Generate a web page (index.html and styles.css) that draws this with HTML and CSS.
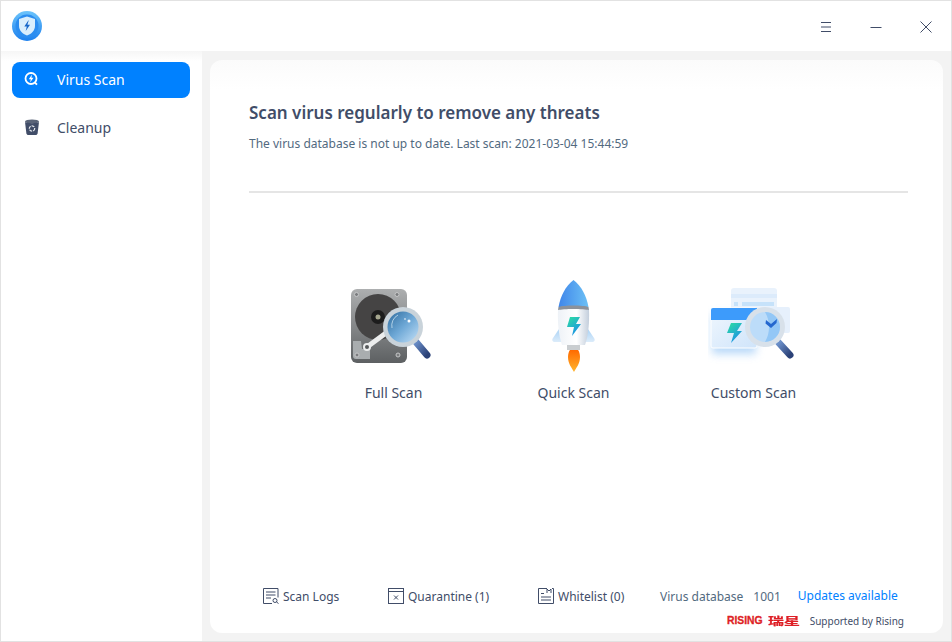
FILE: index.html
```html
<!DOCTYPE html>
<html lang="en">
<head>
    <meta charset="UTF-8">
    <meta name="viewport" content="width=device-width, initial-scale=1.0">
    <title>Virus Scan</title>
    <link rel="stylesheet" href="styles.css">
</head>
<body>
    <svg class="defs" width="0" height="0">
        <defs>
            <linearGradient id="boltGreen" x1="0" y1="0" x2="0.6" y2="1">
                <stop offset="0" stop-color="#2fe0a0"/>
                <stop offset="1" stop-color="#1a8fe8"/>
            </linearGradient>
            <linearGradient id="lensBlue" x1="0" y1="0" x2="1" y2="1">
                <stop offset="0" stop-color="#2f6c9e"/>
                <stop offset="0.5" stop-color="#6ea8d6"/>
                <stop offset="1" stop-color="#c3e0f7"/>
            </linearGradient>
            <linearGradient id="hddBody" x1="0" y1="0" x2="0" y2="1">
                <stop offset="0" stop-color="#adafb0"/>
                <stop offset="1" stop-color="#5d6062"/>
            </linearGradient>
            <linearGradient id="handle" x1="0" y1="0" x2="1" y2="1">
                <stop offset="0" stop-color="#6b8fc9"/>
                <stop offset="1" stop-color="#2b4177"/>
            </linearGradient>
            <linearGradient id="noseBlue" x1="0" y1="0" x2="1" y2="0">
                <stop offset="0" stop-color="#3f86ea"/>
                <stop offset="1" stop-color="#6cc0f5"/>
            </linearGradient>
            <linearGradient id="rocketBody" x1="0" y1="0" x2="1" y2="0">
                <stop offset="0" stop-color="#eef2f7"/>
                <stop offset="0.6" stop-color="#ffffff"/>
                <stop offset="1" stop-color="#c3cedc"/>
            </linearGradient>
            <linearGradient id="flame" x1="0" y1="0" x2="0" y2="1">
                <stop offset="0" stop-color="#ff6a00"/>
                <stop offset="1" stop-color="#ffb52e"/>
            </linearGradient>
            <linearGradient id="fin" x1="0" y1="0" x2="0" y2="1">
                <stop offset="0" stop-color="#9fcdf5"/>
                <stop offset="1" stop-color="#dcecfa"/>
            </linearGradient>
            <linearGradient id="windowBody" x1="0" y1="0" x2="1" y2="1">
                <stop offset="0" stop-color="#f0f7fe"/>
                <stop offset="1" stop-color="#cfe4fa"/>
            </linearGradient>
            <linearGradient id="logoRing" x1="0" y1="0" x2="0" y2="1">
                <stop offset="0" stop-color="#6cc4fb"/>
                <stop offset="1" stop-color="#1c80ee"/>
            </linearGradient>
            <filter id="softShadow" x="-30%" y="-30%" width="160%" height="170%">
                <feGaussianBlur stdDeviation="4"/>
            </filter>
        </defs>
    </svg>

    <div class="window">
        <header class="titlebar">
            <svg class="app-logo" width="30" height="30" viewBox="0 0 30 30">
                <circle cx="15" cy="15" r="15" fill="url(#logoRing)"/>
                <circle cx="15" cy="15" r="11.500" fill="#2b8df0"/>
                <path d="M15 5.500l8 2.600v6.600c0 4.800-3.400 8-8 9.800-4.600-1.800-8-5-8-9.800V8.100z" fill="#d9eefd"/>
                <path d="M16.300 9.500l-4 6h2.500l-1.100 4.500 4.300-6.200h-2.600l1.300-4.300z" fill="#1767c9"/>
            </svg>
            <div class="window-buttons">
                <svg width="12" height="12" viewBox="0 0 12 12"><path d="M1 1.500h10M1 6h10M1 10.500h10" stroke="#414d68" fill="none"/></svg>
                <svg width="12" height="12" viewBox="0 0 12 12"><path d="M0.500 6.500h11" stroke="#414d68" fill="none"/></svg>
                <svg width="12" height="12" viewBox="0 0 12 12"><path d="M0.500 0.500l11 11M11.500 0.500l-11 11" stroke="#414d68" fill="none"/></svg>
            </div>
        </header>

        <div class="content">
            <nav class="sidebar">
                <a class="nav-item active">
                    <svg width="16" height="16" viewBox="0 0 16 16">
                        <circle cx="7" cy="7.500" r="5.500" fill="none" stroke="#fff" stroke-width="1.800"/>
                        <path d="M8 3.600L4.800 8.200h2l-.7 3.200L9.500 6.800H7.400z" fill="#fff"/>
                        <path d="M10.800 11.500l2.200 2.200" stroke="#fff" stroke-width="1.800"/>
                    </svg>
                    <span>Virus Scan</span>
                </a>
                <a class="nav-item">
                    <svg width="16" height="16" viewBox="0 0 16 16">
                        <ellipse cx="8" cy="2.500" rx="7" ry="2" fill="#5a6478"/>
                        <path d="M1 3c1 1.500 13 1.500 14 0l-1.400 11.500c-.1.800-1 1.500-2 1.500H4.400c-1 0-1.900-.7-2-1.500z" fill="#414d68"/>
                        <circle cx="8" cy="9.500" r="2.700" fill="none" stroke="#e6e9ee" stroke-width="1.200" stroke-dasharray="3 1"/>
                    </svg>
                    <span>Cleanup</span>
                </a>
            </nav>

            <div class="main-area">
                <main class="panel">
                    <h1 class="panel-title">Scan virus regularly to remove any threats</h1>
                    <p class="panel-status">The virus database is not up to date. Last scan: 2021-03-04 15:44:59</p>
                    <hr class="divider">

                    <div class="scan-options">
                        <div class="scan-option">
                            <svg width="92" height="92" viewBox="0 0 92 92">
                                <rect x="3" y="9" width="56" height="74" rx="6" fill="url(#hddBody)"/>
                                <circle cx="8.500" cy="14.500" r="2" fill="#7b7d7f" stroke="#c6c7c8"/>
                                <circle cx="49" cy="14.500" r="2" fill="#7b7d7f" stroke="#c6c7c8"/>
                                <circle cx="30" cy="37" r="23" fill="#454444"/>
                                <circle cx="30" cy="37" r="7" fill="#1c1c1c"/>
                                <circle cx="30" cy="37" r="2.500" fill="#a5a68e"/>
                                <path d="M5 61h8l1 8h8v10H8a3 3 0 0 1-3-3z" fill="#a9adaf"/>
                                <circle cx="9" cy="75" r="2" fill="#7b7d7f" stroke="#c6c7c8"/>
                                <circle cx="50" cy="75" r="2" fill="#7b7d7f" stroke="#c6c7c8"/>
                                <path d="M19 67l23-17" stroke="#eceded" stroke-width="5" stroke-linecap="round"/>
                                <circle cx="19" cy="67" r="3" fill="#55585a" stroke="#eceded" stroke-width="2"/>
                                <path d="M68 62l11 13" stroke="url(#handle)" stroke-width="7" stroke-linecap="round"/>
                                <circle cx="55" cy="47" r="20" fill="#c9d3da"/>
                                <circle cx="55" cy="47" r="15.500" fill="url(#lensBlue)"/>
                                <path d="M44 48a12 12 0 0 1 6-13" fill="none" stroke="#d8ecf8" stroke-width="1" opacity="0.700"/>
                                <circle cx="61" cy="41" r="1.500" fill="#fff"/>
                                <circle cx="57" cy="39" r="0.800" fill="#fff"/>
                            </svg>
                            <span>Full Scan</span>
                        </div>
                        <div class="scan-option">
                            <svg width="92" height="92" viewBox="0 0 92 92">
                                <path d="M33 46L25 58c-1.500 2-.5 4 2 4h7zM58 46l8 12c1.500 2 .5 4-2 4h-7z" fill="url(#fin)"/>
                                <path d="M45.500 0c-8 6-13 16-15 27h30c-2-11-7-21-15-27z" fill="url(#noseBlue)"/>
                                <path d="M30.500 27c5-2 25-2 30 0l.5 3H30z" fill="#8c929b"/>
                                <path d="M30 30c5-1.500 26-1.500 31 0 .5 12-.5 25-4 35H34c-3.500-10-4.500-23-4-35z" fill="url(#rocketBody)"/>
                                <path d="M39 65h13v5H39z" fill="#c9cdd0"/>
                                <path d="M46 92c-2-4-6-8-6-15 0-3 1-6 2-7h8c1 1 2 4 2 7 0 7-4 11-6 15z" fill="url(#flame)"/>
                                <path d="M42 37h10l-4 7h5L44 56l2-9h-7z" fill="url(#boltGreen)"/>
                            </svg>
                            <span>Quick Scan</span>
                        </div>
                        <div class="scan-option">
                            <svg width="92" height="92" viewBox="0 0 92 92">
                                <rect x="4" y="34" width="44" height="40" fill="#a9d0f7" filter="url(#softShadow)" opacity="0.800"/>
                                <rect x="23" y="8" width="46" height="46" rx="3" fill="#e9f2fc"/>
                                <path d="M23 14h46v4H23z" fill="#dcebfb"/>
                                <path d="M26 22h4v4h-4zM34 22h32v4H34z" fill="#c6e2fa"/>
                                <rect x="60" y="27" width="22" height="26" rx="2" fill="#e6f0fc"/>
                                <rect x="3" y="28" width="46" height="40" rx="2" fill="url(#windowBody)" stroke="#fff"/>
                                <path d="M3 30a2 2 0 0 1 2-2h44v12H3z" fill="#3d9bfb"/>
                                <path d="M23 43h11l-5 8h5L23 63l3-10h-7z" fill="url(#boltGreen)"/>
                                <path d="M71 63l11 12" stroke="url(#handle)" stroke-width="7" stroke-linecap="round"/>
                                <circle cx="57" cy="47" r="20" fill="#d8e1ea"/>
                                <circle cx="57" cy="47" r="15" fill="#bcdcf9"/>
                                <path d="M57 32a15 15 0 0 1 0 30 30 30 0 0 0 0-30z" fill="#93c7f6"/>
                                <path d="M58 40l5 4 6-5-.5 4-5.500 5-5.500-4.500z" fill="#2467cf"/>
                            </svg>
                            <span>Custom Scan</span>
                        </div>
                    </div>

                    <footer class="panel-footer">
                        <div class="footer-row">
                            <a class="footer-link logs">
                                <svg width="16" height="16" viewBox="0 0 16 16" fill="none" stroke="#414d68">
                                    <path d="M9 15.500H.5V.5h14.500v9"/>
                                    <path d="M3 4h9.500M3 7h9.500M3 10h5"/>
                                    <circle cx="12" cy="12.500" r="2"/>
                                    <path d="M13.500 14l2 1.500"/>
                                </svg>
                                <span>Scan Logs</span>
                            </a>
                            <a class="footer-link quarantine">
                                <svg width="16" height="16" viewBox="0 0 16 16" fill="none" stroke="#414d68">
                                    <rect x="0.500" y="0.500" width="15" height="15"/>
                                    <path d="M.5 3.500h15M6 7.500l4 4M10 7.500l-4 4"/>
                                </svg>
                                <span>Quarantine (1)</span>
                            </a>
                            <a class="footer-link whitelist">
                                <svg width="16" height="16" viewBox="0 0 16 16" fill="none" stroke="#414d68">
                                    <path d="M9 .5H.5v15h15V.5H14"/>
                                    <path d="M3 5.500h3M3 9h10M3 12h10M9 5V1l2 2 2-2v4"/>
                                </svg>
                                <span>Whitelist (0)</span>
                            </a>
                            <div class="db-info">
                                <span class="db-label">Virus database</span>
                                <span class="db-version">1001</span>
                            </div>
                            <a class="updates">Updates available</a>
                        </div>
                        <div class="support-row">
                            <span class="rising-logo"><span class="rising-en">RISING</span><span class="rising-cn">瑞星</span></span>
                            <span class="support-text">Supported by Rising</span>
                        </div>
                    </footer>
                </main>
            </div>
        </div>
    </div>
</body>
</html>
```

FILE: styles.css
```css
* {
    box-sizing: border-box;
}
html, body {
    margin: 0;
    height: 100%;
}
body {
    font-family: "Noto Sans", sans-serif;
    color: #414d68;
    background-color: #fff;
}
.defs {
    position: absolute;
}
svg {
    display: block;
    flex: none;
}
.window {
    height: 642px;
    display: flex;
    flex-direction: column;
    border: 1px solid #e2e2e2;
}
.titlebar {
    height: 50px;
    flex: none;
    display: flex;
    align-items: center;
    justify-content: space-between;
    padding: 0 19px 0 11px;
    background-color: #fff;
}
.window-buttons {
    display: flex;
    gap: 38px;
    margin-top: 1px;
}
.content {
    flex: 1;
    display: flex;
    min-height: 0;
}
.sidebar {
    width: 201px;
    flex: none;
    padding: 11px 12px 0 11px;
    display: flex;
    flex-direction: column;
    gap: 12px;
    background: linear-gradient(#f6f6f6, #fff 10px);
}
.nav-item {
    height: 36px;
    display: flex;
    align-items: center;
    gap: 17px;
    padding: 0 0 2px 12px;
    border-radius: 8px;
    font-size: 14px;
}
.nav-item.active {
    background-color: #0081ff;
    color: #fff;
}
.main-area {
    flex: 1;
    min-width: 0;
    display: flex;
    padding: 9px 8px 8px;
    background-color: #f3f3f3;
}
.panel {
    flex: 1;
    min-width: 0;
    display: flex;
    flex-direction: column;
    padding: 40px 35px 0 39px;
    border-radius: 12px;
    background: linear-gradient(#fbfbfb, #fff 30px);
}
.panel-title {
    margin: 0;
    font-size: 17px;
    line-height: 26px;
    font-weight: 600;
}
.panel-status {
    margin: 9px 0 0;
    font-size: 12px;
    line-height: 18px;
    color: #526a7f;
}
.divider {
    margin: 38px 0 0;
    border: 0;
    height: 2px;
    background-color: #e5e5e5;
}
.scan-options {
    display: flex;
    justify-content: center;
    margin: 87px 0 0 -10px;
}
.scan-option {
    width: 180px;
    display: flex;
    flex-direction: column;
    align-items: center;
    gap: 11px;
    font-size: 14px;
    line-height: 20px;
}
.panel-footer {
    margin-top: auto;
    padding-bottom: 2px;
}
.footer-row {
    display: flex;
    align-items: center;
    height: 20px;
    font-size: 12px;
}
.footer-link {
    display: flex;
    align-items: center;
    gap: 4px;
}
.footer-link.logs {
    margin-left: 14px;
    width: 125px;
}
.footer-link.quarantine {
    width: 150px;
}
.footer-link.whitelist {
    width: 122px;
}
.db-info {
    display: flex;
    gap: 10px;
    color: #526a7f;
}
.updates {
    margin: -1px 0 0 17px;
    color: #0081ff;
}
.support-row {
    display: flex;
    justify-content: flex-end;
    align-items: center;
    gap: 10px;
    margin: 5px 4px 0 0;
    font-size: 10px;
    line-height: 20px;
}
.rising-logo {
    display: flex;
    align-items: center;
    gap: 5px;
    color: #de1f26;
    line-height: 14px;
}
.rising-en {
    font-family: "Liberation Sans", sans-serif;
    font-weight: 700;
    font-size: 10.400px;
    -webkit-text-stroke: 0.3px #de1f26;
}
.rising-cn {
    font-family: "Noto Sans CJK SC", sans-serif;
    font-weight: 700;
    font-size: 14px;
    margin-right: 4px;
    transform: scale(1.14, 0.72);
    transform-origin: left center;
    -webkit-text-stroke: 0.3px #de1f26;
}
```
